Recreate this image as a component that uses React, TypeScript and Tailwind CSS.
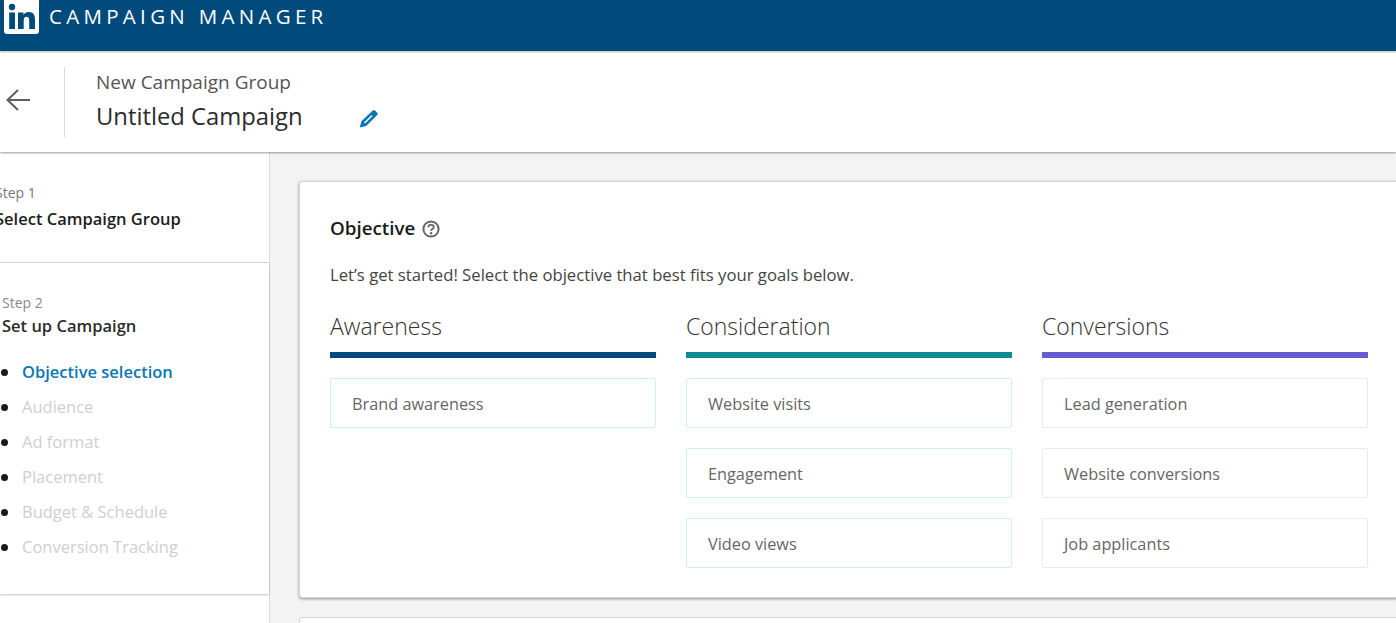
const COLUMNS = [
  {
    title: "Awareness",
    bar: "bg-[#004b7c]",
    border: "border-[#cdeefb]",
    items: ["Brand awareness"],
  },
  {
    title: "Consideration",
    bar: "bg-[#0d8a94]",
    border: "border-[#d2f0f2]",
    items: ["Website visits", "Engagement", "Video views"],
  },
  {
    title: "Conversions",
    bar: "bg-[#665ed0]",
    border: "border-[#e8e6fb]",
    items: ["Lead generation", "Website conversions", "Job applicants"],
  },
];

const SUB_STEPS = ["Audience", "Ad format", "Placement", "Budget & Schedule", "Conversion Tracking"];

function Logo() {
  return (
    <svg width="35" height="34" viewBox="0 0 35 34" className="shrink-0">
      <path d="M0 0H35V31a3 3 0 0 1-3 3H3a3 3 0 0 1-3-3Z" fill="#fff" />
      <circle cx="8" cy="7" r="3.2" fill="#004b7c" />
      <rect x="5.2" y="12.5" width="5.8" height="16.5" fill="#004b7c" />
      <path
        d="M14 12.5h5.5v2.4c1-1.7 2.9-2.9 5.3-2.9 4.4 0 6.2 2.8 6.2 7.2V29h-5.8v-8.6c0-2.2-.7-3.6-2.6-3.6-2 0-2.9 1.5-2.9 3.7V29H14Z"
        fill="#004b7c"
      />
    </svg>
  );
}

function Bullet({ children, tone }: { children: string; tone: string }) {
  return (
    <li className="flex h-[35px] items-center">
      <span className="h-[7px] w-[7px] shrink-0 rounded-full bg-[#1a1a1a]" />
      <span className={`ml-[14px] text-[16.5px] ${tone}`}>{children}</span>
    </li>
  );
}

export default function App() {
  return (
    <div className="flex h-[623px] w-[1396px] flex-col overflow-hidden bg-[#f3f3f3] font-['Open_Sans','Noto_Sans',sans-serif]">
      <header className="z-20 flex h-[51px] shrink-0 items-start bg-[#004b7c] pl-1 shadow-[0_1px_2px_rgba(0,0,0,0.3)]">
        <Logo />
        <span className="ml-[10px] mt-[3px] text-[20.5px] leading-[27px] tracking-[4.3px] text-white">CAMPAIGN MANAGER</span>
      </header>

      <div className="z-10 flex h-[101px] shrink-0 items-center bg-white shadow-[0_1px_2px_rgba(0,0,0,0.4)]">
        <button type="button" className="mb-[3px] ml-[6px] flex w-[26px] items-center justify-start text-[#5e5e5e]">
          <svg width="24" height="22" viewBox="0 0 24 22" fill="none" stroke="currentColor" strokeWidth="2">
            <path d="M24 11H2M12 1 1.5 11 12 21" />
          </svg>
        </button>
        <div className="ml-[32px] h-[70px] w-px bg-[#d9d9d9]" />
        <div className="ml-[31px] flex flex-col">
          <span className="text-[19px] leading-[26px] text-[#555]">New Campaign Group</span>
          <div className="mt-[3px] flex items-center">
            <span className="text-[23.8px] leading-[36px] text-[#2b2b2b]">Untitled Campaign</span>
            <svg width="19" height="18" viewBox="0 0 19 18" fill="#0a77b5" className="ml-[56px] mt-[6px]">
              <path
                d="M13.8.6a1.6 1.6 0 0 1 2.2 0l2.2 2.2a1.6 1.6 0 0 1 0 2.2L7.2 16 .8 17.6 2.4 11.2ZM12.6 5 5 12.6l1 1L13.6 6Z"
                fillRule="evenodd"
              />
            </svg>
          </div>
        </div>
      </div>

      <div className="flex min-h-0 flex-1">
        <aside className="flex w-[270px] shrink-0 flex-col border-r border-[#dcdcdc] bg-white">
          <div className="h-[111px] shrink-0 border-b border-[#d9d9d9] pt-[31px]">
            <div className="-ml-[5px]">
              <div className="text-[14px] leading-[20px] text-[#777]">Step 1</div>
              <div className="mt-[3px] text-[16.5px] font-semibold leading-[26px] text-[#1d1d1d]">Select Campaign Group</div>
            </div>
          </div>
          <div className="h-[331px] shrink-0 pl-[2px] pt-[30px] shadow-[0_1px_2px_rgba(0,0,0,0.25)]">
            <div className="text-[14px] leading-[20px] text-[#888]">Step 2</div>
            <div className="text-[16.5px] font-semibold leading-[26px] text-[#2b2b2b]">Set up Campaign</div>
            <ul className="-ml-px mt-[16px]">
              <Bullet tone="font-semibold text-[#0a77b5]">Objective selection</Bullet>
              {SUB_STEPS.map((s) => (
                <Bullet key={s} tone="text-[#cfcfcf]">
                  {s}
                </Bullet>
              ))}
            </ul>
          </div>
        </aside>

        <main className="min-w-0 flex-1 overflow-hidden pl-[29px] pt-[29px]">
          <section className="h-[417px] w-[1100px] rounded-[3px] border border-[#d4d4d4] bg-white pl-[30px] pt-[31px] shadow-[0_1px_3px_rgba(0,0,0,0.4)]">
            <div className="flex items-center">
              <h2 className="text-[18.8px] font-semibold leading-[30px] text-[#1a1a1a]">Objective</h2>
              <svg width="18" height="18" viewBox="0 0 18 18" fill="none" className="ml-[7px] mt-[2px] text-[#666]">
                <circle cx="9" cy="9" r="7.6" stroke="currentColor" strokeWidth="2" />
                <path d="M6.2 7.3C6.3 5.6 7.6 4.8 9 4.8s2.8.8 2.8 2.2c0 1.9-2.8 2-2.8 3.8" stroke="currentColor" strokeWidth="1.8" />
                <circle cx="9" cy="13.2" r="1.2" fill="currentColor" />
              </svg>
            </div>
            <p className="mt-[20px] text-[16.7px] leading-[24px] text-[#444]">
              Let’s get started! Select the objective that best fits your goals below.
            </p>
            <div className="mt-[21px] flex gap-[30px]">
              {COLUMNS.map((col) => (
                <div key={col.title} className="flex w-[326px] flex-col">
                  <h3 className="text-[23px] font-light leading-[36px] text-[#333]">{col.title}</h3>
                  <div className={`mt-[8px] h-[6px] ${col.bar}`} />
                  <div className="mt-[20px] flex flex-col gap-[20px]">
                    {col.items.map((item) => (
                      <div
                        key={item}
                        className={`flex h-[50px] items-center rounded-[2px] border ${col.border} pl-[21px] pt-[2px] text-[16.3px] text-[#666]`}
                      >
                        {item}
                      </div>
                    ))}
                  </div>
                </div>
              ))}
            </div>
          </section>
          <div className="mt-[19px] h-[40px] w-[1100px] rounded-[3px] border border-[#d4d4d4] bg-white" />
        </main>
      </div>
    </div>
  );
}
